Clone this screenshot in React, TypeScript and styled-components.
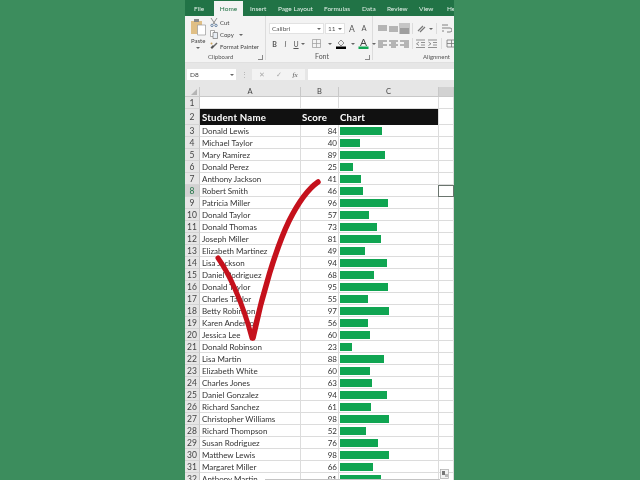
import React from "react";
import styled, { createGlobalStyle } from "styled-components";

const Global = createGlobalStyle`
  html, body { margin: 0; padding: 0; background: #3c8d5d; overflow: hidden; }
  #root { width: 640px; height: 480px; }
`;

const Page = styled.div`
  width: 640px;
  height: 480px;
  padding-left: 185px;
  box-sizing: border-box;
  background: #3c8d5d;
  font-family: Lato, "Open Sans", sans-serif;
`;
const Frame = styled.div`
  position: relative;
  width: 269px;
  height: 480px;
  overflow: hidden;
  background: #fff;
  display: flex;
  flex-direction: column;
  filter: blur(0.3px);
`;
const TabBar = styled.div`
  height: 16px;
  flex: none;
  background: #217346;
  display: flex;
  padding-left: 9px;
`;
const Tab = styled.div<{ $w: number; $active?: boolean }>`
  flex: none;
  width: ${(p) => p.$w}px;
  margin-top: ${(p) => (p.$active ? 1 : 0)}px;
  margin-right: ${(p) => (p.$active ? 7 : 0)}px;
  background: ${(p) => (p.$active ? "#f3f3f3" : "transparent")};
  color: ${(p) => (p.$active ? "#217346" : "#e4f0e9")};
  font-size: 6.5px;
  line-height: ${(p) => (p.$active ? 16 : 17)}px;
  white-space: nowrap;
  text-align: ${(p) => (p.$active ? "center" : "left")};
`;
const Ribbon = styled.div`
  height: 47px;
  flex: none;
  background: #f3f3f3;
  display: flex;
  border-bottom: 1px solid #e0e0e0;
  box-sizing: border-box;
`;
const Group = styled.div<{ $w: number }>`
  flex: none;
  width: ${(p) => p.$w}px;
  box-sizing: border-box;
  border-right: 1px solid #dcdcdc;
  display: flex;
  flex-direction: column;
  margin-bottom: 2px;
`;
const GroupBody = styled.div`
  height: 36px;
  flex: none;
  display: flex;
`;
const GroupLabel = styled.div<{ $pad: number; $size?: number }>`
  position: relative;
  font-size: ${(p) => p.$size ?? 6}px;
  color: #555;
  line-height: 9px;
  padding-left: ${(p) => p.$pad}px;
  white-space: nowrap;
`;
const Launcher = styled.span`
  position: absolute;
  right: 2px;
  top: 3px;
  width: 4px;
  height: 4px;
  border-right: 1px solid #888;
  border-bottom: 1px solid #888;
`;
const PasteCol = styled.div`
  width: 25px;
  flex: none;
  padding: 3px 0 0 6px;
  box-sizing: border-box;
  display: flex;
  flex-direction: column;
  align-items: flex-start;
  font-size: 6px;
  color: #444;
  line-height: 8px;
`;
const PasteIcon = styled.svg`
  width: 15px;
  height: 17px;
  margin-bottom: 1px;
`;
const Caret = styled.span<{ $mx?: number }>`
  flex: none;
  width: 0;
  height: 0;
  margin: 0 ${(p) => p.$mx ?? 0}px;
  border-left: 2px solid transparent;
  border-right: 2px solid transparent;
  border-top: 2px solid #666;
`;
const PasteCaret = styled(Caret)`
  margin: 2px 0 0 5px;
`;
const ClipList = styled.div`
  display: flex;
  flex-direction: column;
  padding-top: 1px;
`;
const ClipItem = styled.div`
  height: 12px;
  display: flex;
  align-items: center;
  gap: 2px;
  font-size: 6px;
  color: #444;
  white-space: nowrap;
`;
const SmallIcon = styled.svg`
  width: 8px;
  height: 9px;
  flex: none;
`;
const RowStack = styled.div`
  display: flex;
  flex-direction: column;
  padding: 7px 0 0 3px;
  gap: 4px;
`;
const ToolRow = styled.div`
  height: 11px;
  display: flex;
  align-items: center;
`;
const Combo = styled.div<{ $w: number }>`
  width: ${(p) => p.$w}px;
  height: 11px;
  flex: none;
  margin-right: 1px;
  background: #fff;
  border: 1px solid #e2e2e2;
  box-sizing: border-box;
  display: flex;
  align-items: center;
  justify-content: space-between;
  padding: 0 2px;
  font-size: 6.5px;
  color: #555;
`;
const GrowFont = styled.span<{ $size: number }>`
  width: 12px;
  flex: none;
  text-align: center;
  font-size: ${(p) => p.$size}px;
  color: #555;
`;
const FmtBtn = styled.span<{ $w: number; $b?: boolean; $i?: boolean; $u?: boolean }>`
  width: ${(p) => p.$w}px;
  flex: none;
  text-align: center;
  font-size: 7px;
  color: #555;
  font-weight: ${(p) => (p.$b ? 700 : 400)};
  font-style: ${(p) => (p.$i ? "italic" : "normal")};
  text-decoration: ${(p) => (p.$u ? "underline" : "none")};
`;
const ToolIcon = styled.svg<{ $mx?: number }>`
  width: 11px;
  height: 11px;
  flex: none;
  margin: 0 ${(p) => p.$mx ?? 0}px;
`;
const ToolSlot = styled.span<{ $on?: boolean }>`
  width: 11px;
  height: 11px;
  flex: none;
  background: ${(p) => (p.$on ? "#c6c6c6" : "transparent")};
  display: flex;
`;
const AlignStack = styled(RowStack)`
  padding-left: 4px;
`;
const AlignDivider = styled.span`
  width: 1px;
  height: 11px;
  background: #dcdcdc;
  margin: 0 2px;
  flex: none;
`;
const ClippedLabel = styled.span`
  font-size: 6.5px;
  color: #555;
  white-space: nowrap;
  flex: none;
`;
const FormulaBand = styled.div`
  height: 24px;
  flex: none;
  background: #e6e6e6;
  display: flex;
  align-items: center;
  padding: 0 0 1px 2px;
  box-sizing: border-box;
`;
const NameBox = styled.div`
  width: 49px;
  height: 11px;
  flex: none;
  background: #fff;
  display: flex;
  align-items: center;
  justify-content: space-between;
  padding: 0 2px 0 3px;
  box-sizing: border-box;
  font-size: 6.5px;
  color: #444;
`;
const Dots = styled.div`
  width: 16px;
  flex: none;
  text-align: center;
  font-size: 7px;
  color: #aaa;
  line-height: 11px;
`;
const FxButtons = styled.div`
  width: 53px;
  height: 11px;
  flex: none;
  background: #f3f3f3;
  display: flex;
  align-items: center;
  justify-content: space-around;
  padding: 0 2px;
  box-sizing: border-box;
  font-size: 7px;
  color: #aaa;
`;
const FxLabel = styled.span`
  color: #555;
  font-family: "Liberation Serif", serif;
  font-style: italic;
`;
const FormulaInput = styled.div`
  flex: 1;
  height: 11px;
  margin-left: 3px;
  background: #fff;
`;
const Sheet = styled.div`
  flex: 1;
  min-height: 0;
  overflow: hidden;
`;
const Row = styled.div<{ $h: number }>`
  display: grid;
  grid-template-columns: 15px 101px 38px 100px 15px;
  height: ${(p) => p.$h}px;
`;
const Corner = styled.div`
  background: #e6e6e6;
  border-right: 1px solid #c8c8c8;
  border-bottom: 1px solid #c8c8c8;
  box-sizing: border-box;
  position: relative;
  &::after {
    content: "";
    position: absolute;
    right: 2px;
    bottom: 1px;
    border-left: 6px solid transparent;
    border-bottom: 6px solid #b4b4b4;
  }
`;
const ColHead = styled.div<{ $sel?: boolean }>`
  background: ${(p) => (p.$sel ? "#d2d2d2" : "#e6e6e6")};
  border-right: 1px solid #c8c8c8;
  border-bottom: 1px solid #c8c8c8;
  box-sizing: border-box;
  text-align: center;
  font-size: 7.5px;
  line-height: 9px;
  color: #444;
`;
const RowHead = styled.div<{ $sel?: boolean }>`
  background: ${(p) => (p.$sel ? "#d2d2d2" : "#e6e6e6")};
  border-right: 1px solid #c8c8c8;
  border-bottom: 1px solid #d4d4d4;
  box-sizing: border-box;
  text-align: center;
  font-size: 8.5px;
  color: ${(p) => (p.$sel ? "#217346" : "#444")};
  display: flex;
  align-items: center;
  justify-content: center;
`;
const Cell = styled.div<{ $right?: boolean }>`
  border-right: 1px solid #dcdcdc;
  border-bottom: 1px solid #dcdcdc;
  box-sizing: border-box;
  font-size: 8px;
  color: #333;
  padding: 0 ${(p) => (p.$right ? 1 : 2)}px;
  display: flex;
  align-items: center;
  justify-content: ${(p) => (p.$right ? "flex-end" : "flex-start")};
  white-space: nowrap;
  overflow: hidden;
`;
const SelectedCell = styled.div`
  margin-left: -1px;
  border: 1px solid #6a756e;
  box-sizing: border-box;
`;
const HeadCell = styled.div<{ $pad: number; $last?: boolean }>`
  background: #111;
  color: #fff;
  font-size: 9.7px;
  font-weight: 700;
  letter-spacing: 0.2px;
  padding-left: ${(p) => p.$pad}px;
  box-sizing: border-box;
  border-right: ${(p) => (p.$last ? "1px solid #dcdcdc" : "none")};
  display: flex;
  align-items: center;
  white-space: nowrap;
`;
const Bar = styled.div`
  height: 8px;
  margin-left: -1px;
  background: #10a552;
`;
const Overlay = styled.svg`
  position: absolute;
  left: 0;
  top: 0;
  width: 269px;
  height: 480px;
`;
const ScrollEdge = styled.div`
  position: absolute;
  left: 80px;
  right: 14px;
  bottom: 0;
  height: 1px;
  background: #c4c4c4;
`;
const PasteOptions = styled.svg`
  position: absolute;
  left: 255px;
  top: 469px;
  width: 9px;
  height: 10px;
`;

const students: [string, number][] = [
  ["Donald Lewis", 84], ["Michael Taylor", 40], ["Mary Ramirez", 89], ["Donald Perez", 25],
  ["Anthony Jackson", 41], ["Robert Smith", 46], ["Patricia Miller", 96], ["Donald Taylor", 57],
  ["Donald Thomas", 73], ["Joseph Miller", 81], ["Elizabeth Martinez", 49], ["Lisa Jackson", 94],
  ["Daniel Rodriguez", 68], ["Donald Taylor", 95], ["Charles Taylor", 55], ["Betty Robinson", 97],
  ["Karen Anderson", 56], ["Jessica Lee", 60], ["Donald Robinson", 23], ["Lisa Martin", 88],
  ["Elizabeth White", 60], ["Charles Jones", 63], ["Daniel Gonzalez", 94], ["Richard Sanchez", 61],
  ["Christopher Williams", 98], ["Richard Thompson", 52], ["Susan Rodriguez", 76], ["Matthew Lewis", 98],
  ["Margaret Miller", 66], ["Anthony Martin", 81],
];

const tabs: [string, number][] = [
  ["Home", 29], ["Insert", 28], ["Page Layout", 46], ["Formulas", 38],
  ["Data", 25], ["Review", 32], ["View", 28], ["Help", 20],
];

const Lines = ({ ys, xs }: { ys: number[]; xs: [number, number][] }) => (
  <ToolIcon viewBox="0 0 11 11">
    {ys.map((y, i) => (
      <path key={i} d={`M${xs[i][0]} ${y}H${xs[i][1]}`} stroke="#777" strokeWidth="1" />
    ))}
  </ToolIcon>
);

export default function App() {
  return (
    <Page>
      <Global />
      <Frame>
        <TabBar>
          <Tab $w={20}>File</Tab>
          {tabs.map(([t, w]) => (
            <Tab key={t} $w={w} $active={t === "Home"}>
              {t}
            </Tab>
          ))}
        </TabBar>
        <Ribbon>
          <Group $w={81}>
            <GroupBody>
              <PasteCol>
                <PasteIcon viewBox="0 0 15 17">
                  <rect x="0" y="2" width="11" height="13" fill="#e0bf85" />
                  <rect x="3" y="0" width="5" height="3" fill="#8a8a8a" />
                  <path d="M6.500 6h8v10h-8z" fill="#fff" stroke="#999" strokeWidth="0.7" />
                </PasteIcon>
                Paste
                <PasteCaret />
              </PasteCol>
              <ClipList>
                <ClipItem>
                  <SmallIcon viewBox="0 0 8 9">
                    <path d="M1 0l4 6M7 0L3 6" stroke="#777" strokeWidth="0.8" fill="none" />
                    <circle cx="2" cy="7.400" r="1.200" fill="none" stroke="#4d6f95" strokeWidth="0.8" />
                    <circle cx="6" cy="7.400" r="1.200" fill="none" stroke="#4d6f95" strokeWidth="0.8" />
                  </SmallIcon>
                  Cut
                </ClipItem>
                <ClipItem>
                  <SmallIcon viewBox="0 0 8 9">
                    <path d="M0.500 0.500h4v6h-4z" fill="#fff" stroke="#888" strokeWidth="0.7" />
                    <path d="M3 2.500h4.500v6H3z" fill="#e8eef5" stroke="#777" strokeWidth="0.7" />
                  </SmallIcon>
                  Copy&nbsp;&nbsp;
                  <Caret />
                </ClipItem>
                <ClipItem>
                  <SmallIcon viewBox="0 0 8 9">
                    <path d="M7 1L4 4" stroke="#666" strokeWidth="1.500" />
                    <path d="M4.500 4.500L2 7 0.500 5.500 3 3z" fill="#555" />
                    <circle cx="1.500" cy="1.500" r="1" fill="#c9a25c" />
                  </SmallIcon>
                  Format Painter
                </ClipItem>
              </ClipList>
            </GroupBody>
            <GroupLabel $pad={23}>
              Clipboard
              <Launcher />
            </GroupLabel>
          </Group>
          <Group $w={107}>
            <GroupBody>
              <RowStack>
                <ToolRow>
                  <Combo $w={55}>
                    Calibri
                    <Caret />
                  </Combo>
                  <Combo $w={20}>
                    11
                    <Caret />
                  </Combo>
                  <GrowFont $size={8.5}>A</GrowFont>
                  <GrowFont $size={7.5}>A</GrowFont>
                </ToolRow>
                <ToolRow>
                  <FmtBtn $w={11} $b>B</FmtBtn>
                  <FmtBtn $w={11} $i>I</FmtBtn>
                  <FmtBtn $w={10} $u>U</FmtBtn>
                  <Caret />
                  <ToolIcon $mx={6} viewBox="0 0 11 11">
                    <path d="M1.500 1.500h8v8h-8zM5.500 1.500v8M1.500 5.500h8" fill="none" stroke="#999" strokeWidth="0.7" />
                  </ToolIcon>
                  <Caret />
                  <ToolIcon $mx={4} viewBox="0 0 11 11">
                    <path d="M2 5l3-3 3 3-3 3z" fill="#eee" stroke="#777" strokeWidth="0.8" />
                    <rect x="0" y="8.500" width="10" height="2.500" fill="#000" />
                  </ToolIcon>
                  <Caret />
                  <ToolIcon $mx={3} viewBox="0 0 11 11">
                    <path d="M2.500 8L5.500 1l3 7M3.800 5.500h3.400" fill="none" stroke="#444" strokeWidth="1" />
                    <rect x="0.500" y="8.500" width="10" height="2.500" fill="#10a552" />
                  </ToolIcon>
                  <Caret />
                </ToolRow>
              </RowStack>
            </GroupBody>
            <GroupLabel $pad={49} $size={7}>
              Font
              <Launcher />
            </GroupLabel>
          </Group>
          <Group $w={90}>
            <GroupBody>
              <AlignStack>
                <ToolRow>
                  <Lines ys={[3, 5, 7]} xs={[[1, 10], [1, 10], [1, 10]]} />
                  <Lines ys={[4, 6, 8]} xs={[[1, 10], [1, 10], [1, 10]]} />
                  <ToolSlot $on>
                    <Lines ys={[6, 8, 10]} xs={[[1, 10], [1, 10], [1, 10]]} />
                  </ToolSlot>
                  <AlignDivider />
                  <ToolIcon $mx={1} viewBox="0 0 11 11">
                    <path d="M2 8l5-5M4 9l5-5" stroke="#777" strokeWidth="1.200" />
                  </ToolIcon>
                  <Caret $mx={1} />
                  <AlignDivider />
                  <ToolIcon $mx={2} viewBox="0 0 11 11">
                    <path d="M1 2h6M1 5h8a2 2 0 0 1 0 4H6M1 8h2" fill="none" stroke="#777" strokeWidth="0.9" />
                  </ToolIcon>
                  <ClippedLabel>Wrap</ClippedLabel>
                </ToolRow>
                <ToolRow>
                  <Lines ys={[3, 5, 7, 9]} xs={[[1, 10], [1, 6], [1, 10], [1, 6]]} />
                  <Lines ys={[3, 5, 7, 9]} xs={[[1, 10], [3, 8], [1, 10], [3, 8]]} />
                  <Lines ys={[3, 5, 7, 9]} xs={[[1, 10], [5, 10], [1, 10], [5, 10]]} />
                  <AlignDivider />
                  <ToolIcon viewBox="0 0 11 11">
                    <path d="M1 2h9M6 4.500h4M6 7h4M1 9.500h9M4 4L1.500 5.750 4 7.500" fill="none" stroke="#777" strokeWidth="0.8" />
                  </ToolIcon>
                  <ToolIcon $mx={1} viewBox="0 0 11 11">
                    <path d="M1 2h9M6 4.500h4M6 7h4M1 9.500h9M1.500 4L4 5.750 1.500 7.500" fill="none" stroke="#777" strokeWidth="0.8" />
                  </ToolIcon>
                  <AlignDivider />
                  <ToolIcon $mx={2} viewBox="0 0 11 11">
                    <path d="M1 2h9v7H1zM1 5.500h9M5.500 2v7" fill="none" stroke="#777" strokeWidth="0.8" />
                  </ToolIcon>
                  <ClippedLabel>Merge</ClippedLabel>
                </ToolRow>
              </AlignStack>
            </GroupBody>
            <GroupLabel $pad={50}>Alignment</GroupLabel>
          </Group>
        </Ribbon>
        <FormulaBand>
          <NameBox>
            D8
            <Caret />
          </NameBox>
          <Dots>⋮</Dots>
          <FxButtons>
            <span>✕</span>
            <span>✓</span>
            <FxLabel>fx</FxLabel>
          </FxButtons>
          <FormulaInput />
        </FormulaBand>
        <Sheet>
          <Row $h={10}>
            <Corner />
            <ColHead>A</ColHead>
            <ColHead>B</ColHead>
            <ColHead>C</ColHead>
            <ColHead $sel />
          </Row>
          <Row $h={12}>
            <RowHead>1</RowHead>
            <Cell />
            <Cell />
            <Cell />
            <Cell />
          </Row>
          <Row $h={16}>
            <RowHead>2</RowHead>
            <HeadCell $pad={2}>Student Name</HeadCell>
            <HeadCell $pad={1}>Score</HeadCell>
            <HeadCell $pad={1} $last>Chart</HeadCell>
            <Cell />
          </Row>
          {students.map(([name, score], i) => (
            <Row key={i} $h={12}>
              <RowHead $sel={i === 5}>{i + 3}</RowHead>
              <Cell>{name}</Cell>
              <Cell $right>{score}</Cell>
              <Cell>
                <Bar style={{ width: score / 2 }} />
              </Cell>
              {i === 5 ? <SelectedCell /> : <Cell />}
            </Row>
          ))}
        </Sheet>
        <ScrollEdge />
        <PasteOptions viewBox="0 0 9 10">
          <rect x="0.500" y="0.500" width="8" height="9" fill="#f3f3f3" stroke="#aaa" strokeWidth="0.7" />
          <rect x="2" y="2" width="3" height="4" fill="#777" />
          <path d="M5 5h3v3H5z" fill="#bbb" />
        </PasteOptions>
        <Overlay viewBox="185 0 269 480">
          <path
            d="M218 258 C228 272 242 300 252 338"
            fill="none"
            stroke="#c5111c"
            strokeWidth="5"
            strokeLinecap="round"
          />
          <path
            d="M318 182 C308 189 298 203 289 221 C276 248 262 295 253 338"
            fill="none"
            stroke="#c5111c"
            strokeWidth="5.500"
            strokeLinecap="round"
          />
        </Overlay>
      </Frame>
    </Page>
  );
}
